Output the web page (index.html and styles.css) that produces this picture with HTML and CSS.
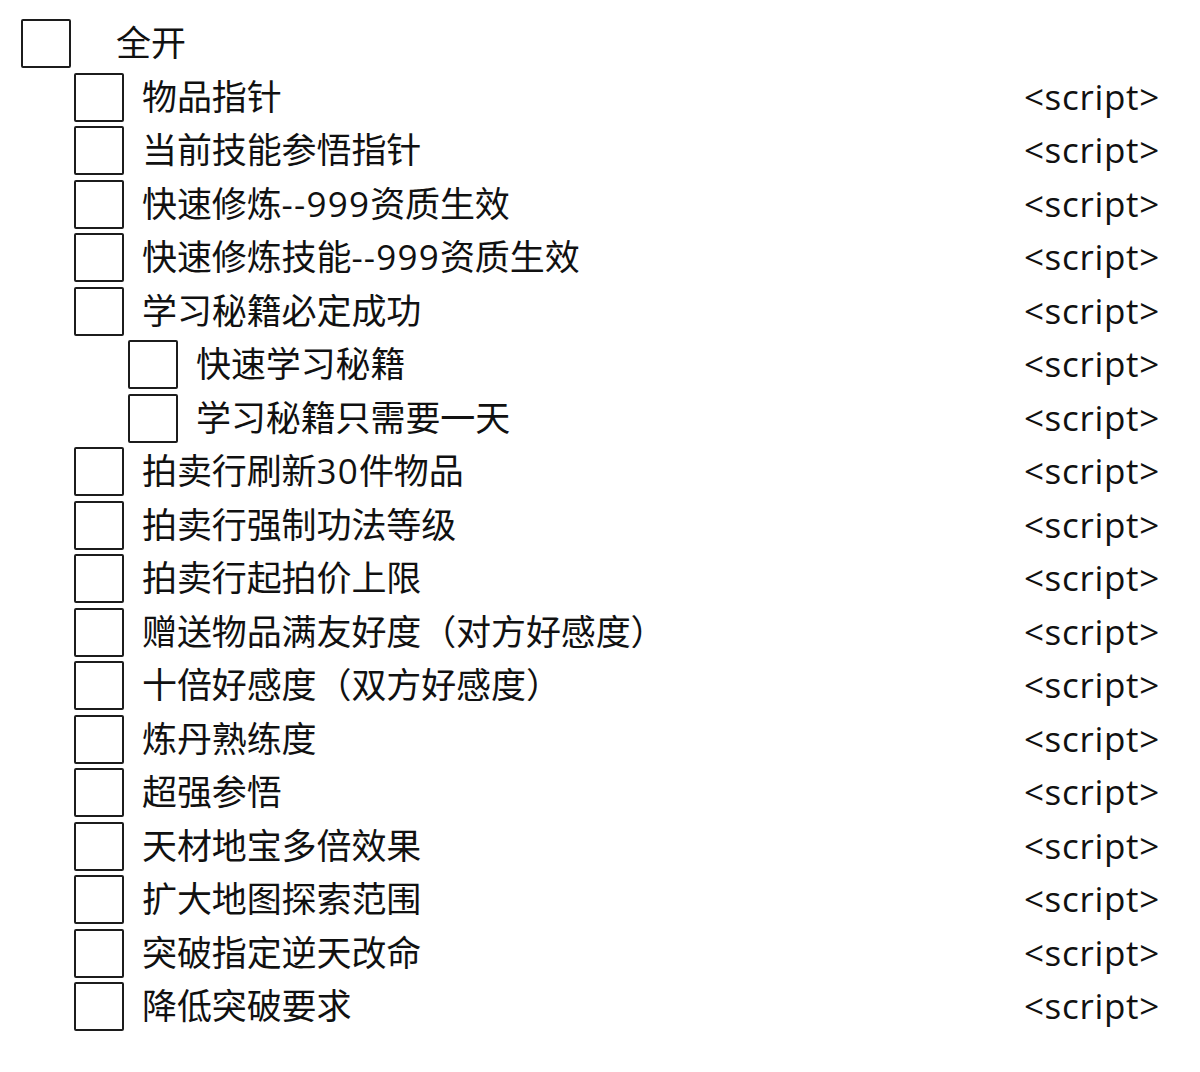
FILE: index.html
```html
<!DOCTYPE html>
<html lang="zh-CN">
<head>
<meta charset="utf-8">
<title>列表</title>
<link rel="stylesheet" href="styles.css">
</head>
<body>
<div class="tree">
  <div class="row lvl0"><span class="box"></span><span class="label">全开</span></div>
  <div class="row lvl1"><span class="box"></span><span class="label">物品指针</span><span class="val">&lt;script&gt;</span></div>
  <div class="row lvl1"><span class="box"></span><span class="label">当前技能参悟指针</span><span class="val">&lt;script&gt;</span></div>
  <div class="row lvl1"><span class="box"></span><span class="label">快速修炼<span class="lat">--999</span>资质生效</span><span class="val">&lt;script&gt;</span></div>
  <div class="row lvl1"><span class="box"></span><span class="label">快速修炼技能<span class="lat">--999</span>资质生效</span><span class="val">&lt;script&gt;</span></div>
  <div class="row lvl1"><span class="box"></span><span class="label">学习秘籍必定成功</span><span class="val">&lt;script&gt;</span></div>
  <div class="row lvl2"><span class="box"></span><span class="label">快速学习秘籍</span><span class="val">&lt;script&gt;</span></div>
  <div class="row lvl2"><span class="box"></span><span class="label">学习秘籍只需要一天</span><span class="val">&lt;script&gt;</span></div>
  <div class="row lvl1"><span class="box"></span><span class="label">拍卖行刷新<span class="lat">30</span>件物品</span><span class="val">&lt;script&gt;</span></div>
  <div class="row lvl1"><span class="box"></span><span class="label">拍卖行强制功法等级</span><span class="val">&lt;script&gt;</span></div>
  <div class="row lvl1"><span class="box"></span><span class="label">拍卖行起拍价上限</span><span class="val">&lt;script&gt;</span></div>
  <div class="row lvl1"><span class="box"></span><span class="label">赠送物品满友好度（对方好感度）</span><span class="val">&lt;script&gt;</span></div>
  <div class="row lvl1"><span class="box"></span><span class="label">十倍好感度（双方好感度）</span><span class="val">&lt;script&gt;</span></div>
  <div class="row lvl1"><span class="box"></span><span class="label">炼丹熟练度</span><span class="val">&lt;script&gt;</span></div>
  <div class="row lvl1"><span class="box"></span><span class="label">超强参悟</span><span class="val">&lt;script&gt;</span></div>
  <div class="row lvl1"><span class="box"></span><span class="label">天材地宝多倍效果</span><span class="val">&lt;script&gt;</span></div>
  <div class="row lvl1"><span class="box"></span><span class="label">扩大地图探索范围</span><span class="val">&lt;script&gt;</span></div>
  <div class="row lvl1"><span class="box"></span><span class="label">突破指定逆天改命</span><span class="val">&lt;script&gt;</span></div>
  <div class="row lvl1"><span class="box"></span><span class="label">降低突破要求</span><span class="val">&lt;script&gt;</span></div>
</div>
</body>
</html>
```

FILE: styles.css
```css
html, body {
  margin: 0;
  background: #ffffff;
}

body {
  font-family: "Open Sans", "Noto Sans CJK SC", sans-serif;
  font-size: 35px;
  color: #111111;
}

.tree {
  padding: 16px 40px 0 21px;
}

.row {
  display: flex;
  align-items: center;
  height: 53.5px;
  line-height: 1;
  white-space: nowrap;
}

.box {
  flex: none;
  box-sizing: border-box;
  width: 50px;
  height: 49px;
  margin-top: 2px;
  border: 2px solid #1c1c1c;
  border-radius: 2px;
}

.lvl1 {
  padding-left: 53px;
}

.lvl2 {
  padding-left: 107px;
}

.label {
  margin-left: 18px;
  letter-spacing: -0.1px;
}

.lat {
  letter-spacing: 1.2px;
}

.lvl0 .label {
  margin-left: 45px;
}

.val {
  margin-left: auto;
  letter-spacing: 0.7px;
}
```
